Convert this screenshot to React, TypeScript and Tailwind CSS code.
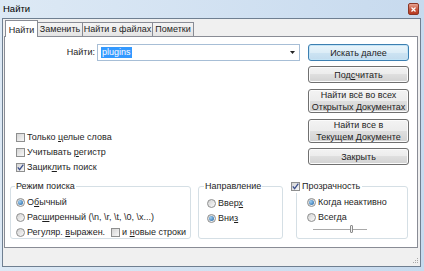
import type { ReactNode } from "react";

function Check({ checked = false }: { checked?: boolean }) {
  return (
    <span className="flex h-[9px] w-[9px] shrink-0 items-center justify-center border border-[#8e8f8f] bg-[linear-gradient(135deg,#d4d4d4,#f8f8f8)]">
      {checked && (
        <svg width="7" height="7" viewBox="0 0 7 7">
          <path d="M0.8 3.4 L2.6 5.6 L6.3 0.7" fill="none" stroke="#3b4f8c" strokeWidth="1.3" />
        </svg>
      )}
    </span>
  );
}

function Radio({ checked = false }: { checked?: boolean }) {
  return (
    <span className="flex h-[9px] w-[9px] shrink-0 items-center justify-center rounded-full border border-[#8e8f8f] bg-[linear-gradient(135deg,#d2d2d2,#fafafa)]">
      {checked && <span className="h-[5px] w-[5px] rounded-full bg-[radial-gradient(circle_at_35%_35%,#9fd0f5,#1d5f9e)]" />}
    </span>
  );
}

function Row({ box, children }: { box: ReactNode; children: ReactNode }) {
  return (
    <div className="flex h-[15px] items-center gap-[2px]">
      {box}
      <span className="whitespace-nowrap">{children}</span>
    </div>
  );
}

function U({ children }: { children: ReactNode }) {
  return <span className="underline underline-offset-1">{children}</span>;
}

function Btn({ children, tall = false, primary = false }: { children: ReactNode; tall?: boolean; primary?: boolean }) {
  const size = tall ? "h-[24px]" : "h-[17px]";
  const look = primary
    ? "border-[#3c7fb1] bg-[linear-gradient(#eaf5fb,#dcedf7_50%,#cde4f3_50%,#c2dcee)] shadow-[inset_0_0_0_1px_#c4e4f6]"
    : "border-[#707070] bg-[linear-gradient(#f3f3f3,#ececec_50%,#dfdfdf_50%,#d2d2d2)] shadow-[inset_0_0_0_1px_#fbfbfb]";
  return (
    <div className={`flex w-[101px] items-center justify-center rounded-[3px] border text-center leading-[12px] ${size} ${look}`}>
      {children}
    </div>
  );
}

function Group({ title, className, children }: { title: ReactNode; className: string; children: ReactNode }) {
  return (
    <div className={`relative h-[53px] rounded-[3px] border border-[#d5dfe5] ${className}`}>
      {title}
      {children}
    </div>
  );
}

export default function App() {
  return (
    <div className="flex h-[271px] w-[424px] flex-col overflow-hidden bg-[linear-gradient(to_right,#dde9f5,#c7daee)] font-['Liberation_Sans',Arial,sans-serif] text-[9px] text-[#1e1e1e]">
      {/* title bar */}
      <div className="flex h-[18px] shrink-0 items-center justify-between pl-[3px] pr-[5px]">
        <span className="text-[9.5px] text-black">Найти</span>
        <div className="flex h-[12px] w-[11px] items-center justify-center rounded-[2px] border border-[#8a3626] bg-[linear-gradient(#e8a593,#c85a43_50%,#b8391f)]">
          <svg width="5" height="5" viewBox="0 0 5 5">
            <path d="M0.5 0.5 L4.5 4.5 M4.5 0.5 L0.5 4.5" stroke="#fff" strokeWidth="1.2" />
          </svg>
        </div>
      </div>

      {/* client area */}
      <div className="relative ml-[2px] mr-[3px] flex flex-1 flex-col border border-[#6f7f91] bg-[#f0f0f0] pl-[1px] pr-[2px]">
        {/* tabs */}
        <div className="flex h-[17px] items-end pl-[1px]">
          <div className="relative z-10 -mb-px flex h-[17px] w-[33px] items-start justify-center border border-b-0 border-[#898c95] bg-white pt-[3px]">
            Найти
          </div>
          <div className="flex h-[14px] w-[45px] items-center justify-center border-r border-t border-[#898c95] bg-[linear-gradient(#f4f4f4,#e4e4e4)]">
            Заменить
          </div>
          <div className="flex h-[14px] w-[70px] items-center justify-center border-r border-t border-[#898c95] bg-[linear-gradient(#f4f4f4,#e4e4e4)]">
            Найти в файлах
          </div>
          <div className="flex h-[14px] w-[41px] items-center justify-center border-r border-t border-[#898c95] bg-[linear-gradient(#f4f4f4,#e4e4e4)]">
            Пометки
          </div>
        </div>

        {/* tab page */}
        <div className="h-[212px] border border-[#898c95] bg-white pl-[5px] pr-[8px] pt-[7px]">
          <div className="flex">
            <div className="flex flex-col">
              <div className="flex h-[17px] items-center">
                <span className="w-[85px] text-right">Найти:</span>
                <div className="ml-[2px] flex h-[17px] w-[203px] items-center justify-between border border-[#a7bed6] bg-white pl-[3px] pr-[4px]">
                  <span className="bg-[#3399ff] px-[1px] leading-[11px] text-white">plugins</span>
                  <svg width="5" height="3" viewBox="0 0 5 3">
                    <path d="M0 0 H5 L2.5 3 Z" fill="#222" />
                  </svg>
                </div>
              </div>
              <div className="ml-[6px] mt-[69px] flex flex-col">
                <Row box={<Check />}>
                  Только <U>ц</U>елые слова
                </Row>
                <Row box={<Check />}>
                  Учитывать <U>р</U>егистр
                </Row>
                <Row box={<Check checked />}>
                  Зацик<U>л</U>ить поиск
                </Row>
              </div>
            </div>
            <div className="ml-auto flex flex-col">
              <Btn primary>Искать далее</Btn>
              <div className="mt-[5px]">
                <Btn>
                  Под<U>с</U>читать
                </Btn>
              </div>
              <div className="mt-[6px]">
                <Btn tall>
                  Найти всё во всех
                  <br />
                  Открытых Документах
                </Btn>
              </div>
              <div className="mt-[6px]">
                <Btn tall>
                  Найти все в
                  <br />
                  Текущем Документе
                </Btn>
              </div>
              <div className="mt-[5px]">
                <Btn>Закрыть</Btn>
              </div>
            </div>
          </div>

          {/* option groups */}
          <div className="mt-[11px] flex">
            <Group
              className="w-[181px] pl-[5px] pt-[8px]"
              title={<div className="absolute -top-[7px] left-[4px] bg-white px-[1px] leading-[12px]">Режим поиска</div>}
            >
              <Row box={<Radio checked />}>
                О<U>б</U>ычный
              </Row>
              <Row box={<Radio />}>
                Рас<U>ш</U>иренный (\n, \r, \t, \0, \x...)
              </Row>
              <div className="flex items-center">
                <Row box={<Radio />}>
                  Регуляр. <U>в</U>ыражен.
                </Row>
                <div className="ml-[6px]">
                  <Row box={<Check />}>
                    и <U>н</U>овые строки
                  </Row>
                </div>
              </div>
            </Group>
            <Group
              className="ml-[7px] w-[85px] pl-[8px] pt-[9px]"
              title={<div className="absolute -top-[7px] left-[5px] bg-white px-[1px] leading-[12px]">Направление</div>}
            >
              <Row box={<Radio />}>
                Ввер<U>х</U>
              </Row>
              <Row box={<Radio checked />}>
                Вни<U>з</U>
              </Row>
            </Group>
            <Group
              className="ml-[13px] w-[112px] pl-[10px] pt-[8px]"
              title={
                <div className="absolute -top-[7px] -left-[6px] flex h-[13px] items-center gap-[2px] bg-white pr-[2px]">
                  <Check checked />
                  <span>Прозрачность</span>
                </div>
              }
            >
              <Row box={<Radio checked />}>Когда неактивно</Row>
              <Row box={<Radio />}>Всегда</Row>
              <div className="relative ml-[6px] flex h-[8px] w-[54px] items-center">
                <div className="h-px w-full bg-[#a9a9a9]" />
                <div className="absolute left-[37px] top-0 h-[8px] w-[3px] rounded-[1px] border border-[#8c8c8c] bg-[#f2f2f2]" />
              </div>
            </Group>
          </div>
        </div>

        {/* size grip */}
        <svg className="absolute bottom-[2px] right-[1px]" width="7" height="7" viewBox="0 0 7 7">
          <rect x="5" y="1" width="1" height="1" fill="#a8a8a8" />
          <rect x="3" y="3" width="1" height="1" fill="#a8a8a8" />
          <rect x="5" y="3" width="1" height="1" fill="#a8a8a8" />
          <rect x="1" y="5" width="1" height="1" fill="#a8a8a8" />
          <rect x="3" y="5" width="1" height="1" fill="#a8a8a8" />
          <rect x="5" y="5" width="1" height="1" fill="#a8a8a8" />
        </svg>
      </div>
      <div className="h-[4px] shrink-0" />
    </div>
  );
}
